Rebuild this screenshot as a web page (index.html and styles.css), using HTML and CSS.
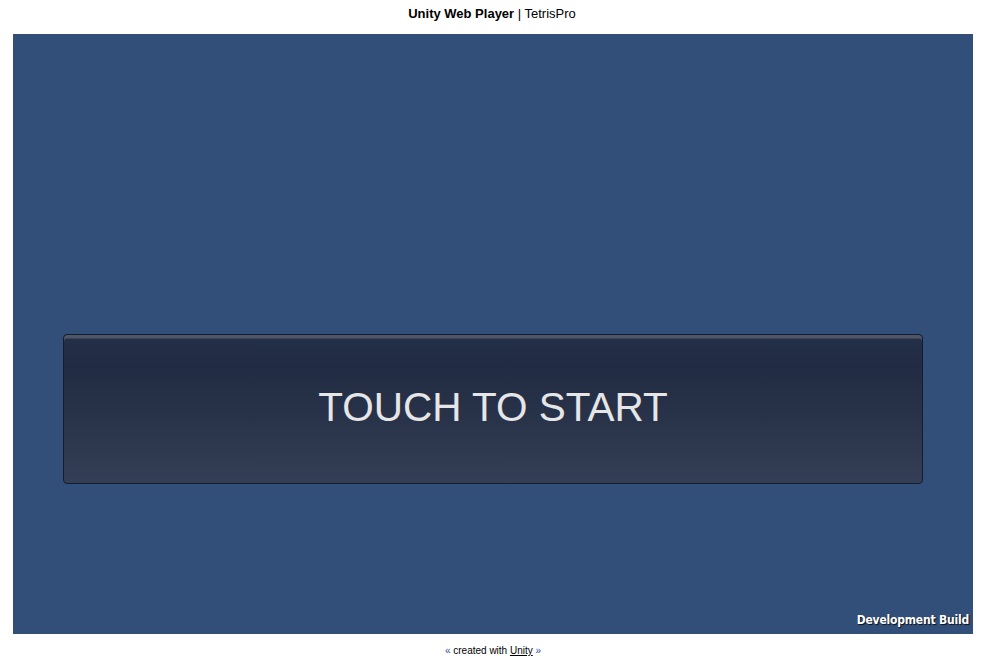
FILE: index.html
```html
<!DOCTYPE html>
<html>
<head>
<meta charset="utf-8">
<link rel="stylesheet" href="styles.css">
</head>
<body>
<div class="page">
  <p class="header"><span class="brand">Unity Web Player</span> | TetrisPro</p>
  <div class="player">
    <div class="stage">
      <button class="start">TOUCH TO START</button>
    </div>
    <div class="devbuild">Development Build</div>
  </div>
  <p class="footer"><span class="q">&laquo;</span> created with <a href="#">Unity</a> <span class="q">&raquo;</span></p>
</div>
</body>
</html>
```
FILE: styles.css
```css
html, body {
  margin: 0;
  padding: 0;
  background: #ffffff;
}
.page {
  width: 988px;
  display: flex;
  flex-direction: column;
  align-items: center;
  font-family: "Liberation Sans", Arial, sans-serif;
  color: #000;
}
.header {
  margin: 0 0 0 -4px;
  height: 34px;
  line-height: 28px;
  font-size: 13px;
}
.brand {
  font-weight: bold;
}
.player {
  position: relative;
  width: 960px;
  height: 600px;
  background: #324f7a;
  margin-left: -2px;
  display: flex;
  flex-direction: column;
}
.stage {
  flex: 1;
  display: flex;
  align-items: flex-start;
  justify-content: center;
  padding-top: 300px;
}
.start {
  width: 860px;
  height: 150px;
  box-sizing: border-box;
  border: 1px solid #151c2b;
  border-radius: 4px;
  background: linear-gradient(#242f48 0%, #212c44 20%, #283349 55%, #343e56 100%);
  box-shadow: inset 0 3px 0 #4f5669, inset 0 4px 0 #3a4257;
  color: #e6e6e8;
  font-family: "Liberation Sans", Arial, sans-serif;
  font-size: 40.5px;
  padding: 0 0 4px 0;
  cursor: pointer;
}
.devbuild {
  position: absolute;
  right: 4px;
  bottom: 7px;
  font-family: "DejaVu Sans Condensed", "DejaVu Sans", sans-serif;
  font-weight: bold;
  font-size: 12px;
  letter-spacing: -0.2px;
  color: #ffffff;
  text-shadow: 1px 1px 1px rgba(0,0,0,0.8);
}
.footer {
  margin: 0;
  height: 38px;
  line-height: 33px;
  font-size: 10px;
  margin-left: -2px;
}
.footer .q {
  color: #2a4fa0;
}
.footer a {
  color: #000;
  text-decoration: underline;
}
```
